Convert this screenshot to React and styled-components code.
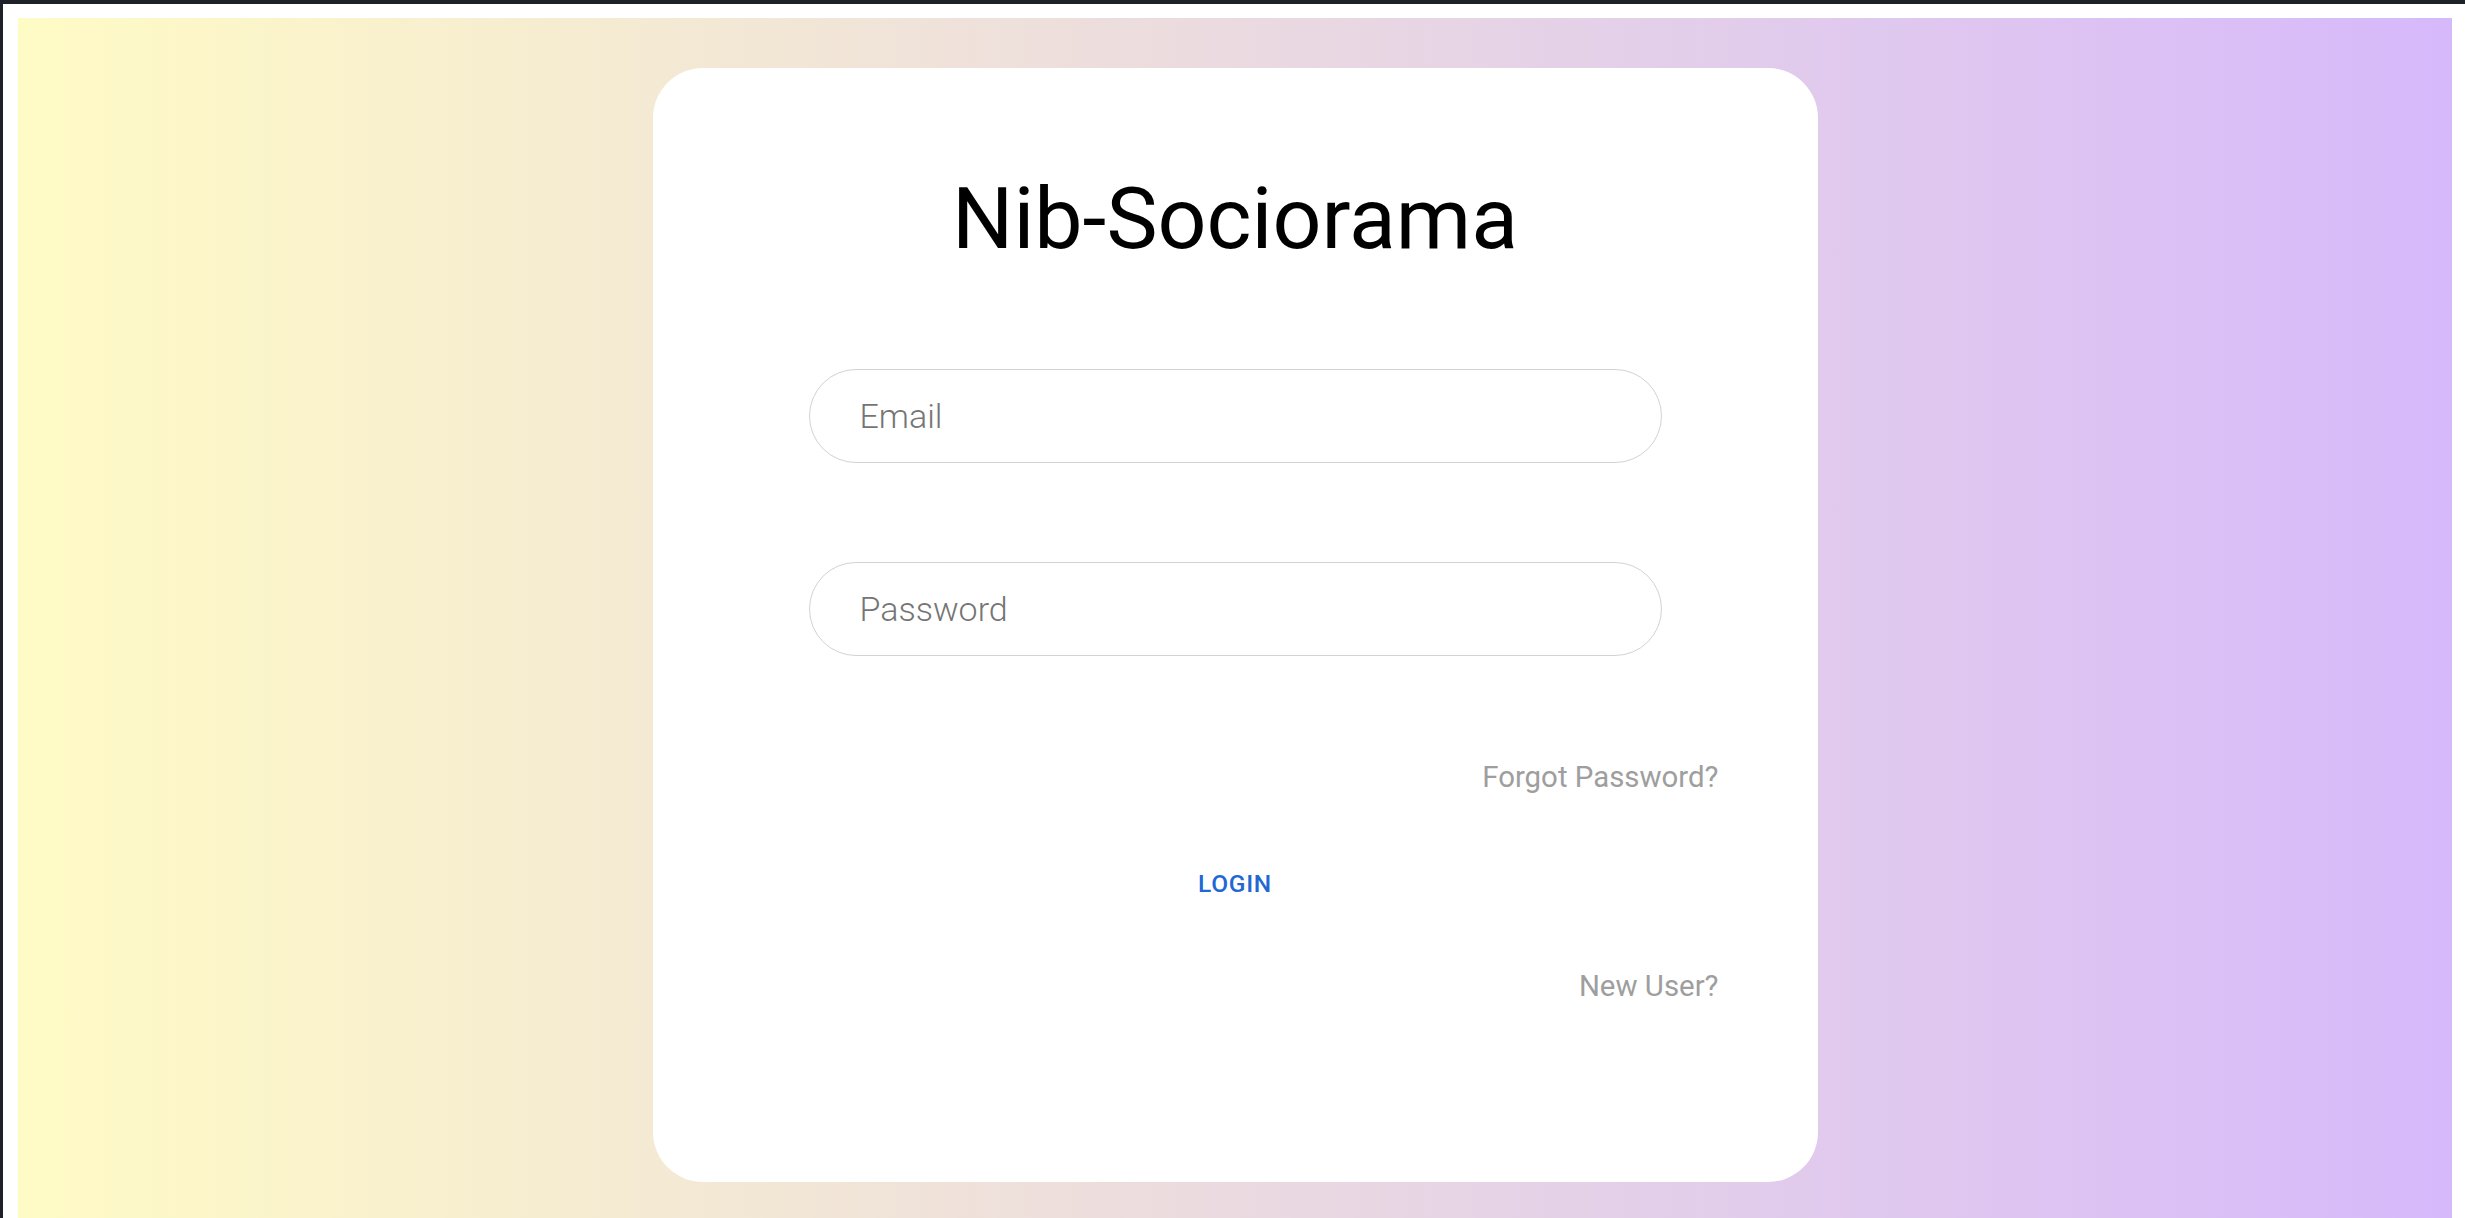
import React from "react";
import styled, { createGlobalStyle } from "styled-components";

const Global = createGlobalStyle`
  html, body {
    margin: 0;
    padding: 0;
    height: 100%;
    overflow: hidden;
  }
  body {
    background: #1f2128;
    font-family: Roboto, "Liberation Sans", Arial, sans-serif;
  }
  * { box-sizing: border-box; }
`;

const Frame = styled.div`
  height: 1218px;
  padding: 4px 0 0 3px;
  background: #1f2128;
`;

const Sheet = styled.div`
  height: 100%;
  background: #ffffff;
  padding: 14px 13px 0 15px;
  overflow: hidden;
`;

const Backdrop = styled.main`
  min-height: 1300px;
  padding: 50px 0;
  background: linear-gradient(to right, #fffbc5 0%, #d6b9fb 100%);
`;

const Card = styled.section`
  width: 1165px;
  height: 1114px;
  margin: 0 auto;
  background: #ffffff;
  border-radius: 50px;
  padding: 108px 99px 0;
  display: flex;
  flex-direction: column;
`;

const Title = styled.h1`
  margin: 0;
  font-size: 86px;
  line-height: 86px;
  font-weight: 400;
  color: #000000;
  text-align: center;
  letter-spacing: 0;
`;

const Field = styled.input`
  align-self: center;
  width: 853px;
  height: 94px;
  margin-top: ${(p) => p.$gap}px;
  border: 1px solid #d3d3d3;
  border-radius: 47px;
  padding: 0 40px 0 50px;
  font-family: Roboto, "Liberation Sans", Arial, sans-serif;
  font-size: 34px;
  font-weight: 300;
  color: #333;
  outline: none;
  background: #fff;
  &::placeholder {
    color: #757575;
    opacity: 1;
  }
`;

const TextLink = styled.a`
  align-self: flex-end;
  margin-top: ${(p) => p.$gap}px;
  font-size: 29.4px;
  line-height: 42px;
  font-weight: 400;
  color: #9e9e9e;
  text-decoration: none;
  cursor: pointer;
`;

const LoginButton = styled.button`
  align-self: center;
  margin-top: 64px;
  border: none;
  background: transparent;
  padding: 0 14px;
  font-family: Roboto, "Liberation Sans", Arial, sans-serif;
  font-size: 24.5px;
  line-height: 43px;
  font-weight: 500;
  letter-spacing: 0.7px;
  text-transform: uppercase;
  color: #2267d4;
  cursor: pointer;
`;

export default function App() {
  return (
    <>
      <Global />
      <Frame>
        <Sheet>
          <Backdrop>
            <Card>
              <Title>Nib-Sociorama</Title>
              <Field $gap={107} type="email" placeholder="Email" />
              <Field $gap={99} type="password" placeholder="Password" />
              <TextLink $gap={100}>Forgot Password?</TextLink>
              <LoginButton>Login</LoginButton>
              <TextLink $gap={60}>New User?</TextLink>
            </Card>
          </Backdrop>
        </Sheet>
      </Frame>
    </>
  );
}
